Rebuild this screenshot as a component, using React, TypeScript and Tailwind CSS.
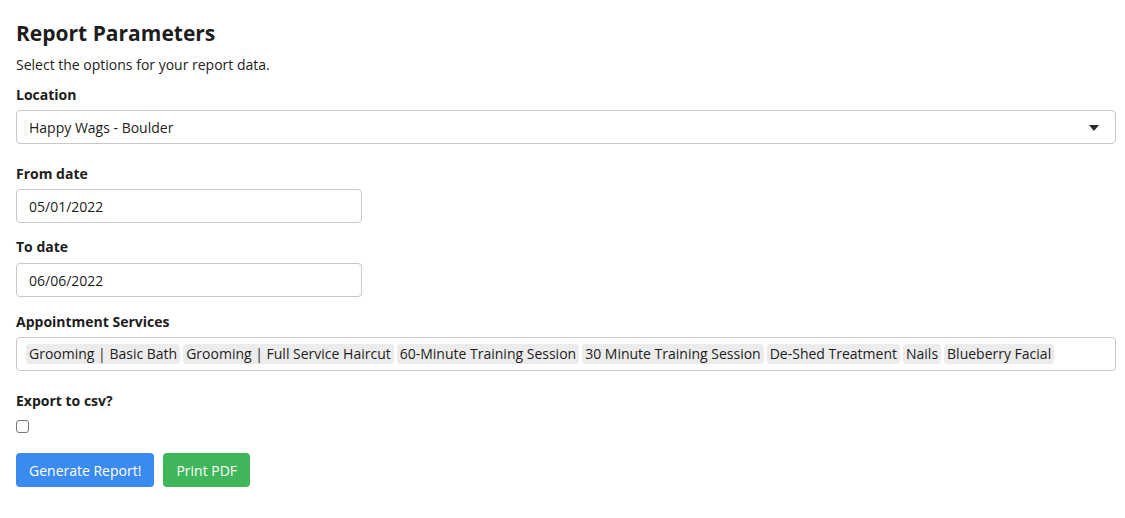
const services = [
  "Grooming | Basic Bath",
  "Grooming | Full Service Haircut",
  "60-Minute Training Session",
  "30 Minute Training Session",
  "De-Shed Treatment",
  "Nails",
  "Blueberry Facial",
];

function Label({ children, className = "" }: { children: React.ReactNode; className?: string }) {
  return <div className={`text-[14px] leading-5 font-bold text-[#1d1d1d] ${className}`}>{children}</div>;
}

export default function App() {
  return (
    <div className="min-h-[518px] bg-white px-4 pt-[19px] font-['Open_Sans',sans-serif] text-[#1d1d1d]">
      <h1 className="text-[21px] leading-7 font-bold">Report Parameters</h1>
      <p className="mt-2 text-[14px] leading-5">Select the options for your report data.</p>

      <Label className="mt-[10px]">Location</Label>
      <div className="mt-[5px] flex h-[34px] w-[1100px] items-center justify-between rounded border border-[#c8c8c8] pl-3 pr-4 text-[14px]">
        <span>Happy Wags - Boulder</span>
        <svg width="10" height="6" viewBox="0 0 10 6" className="mt-px">
          <path d="M0 0h10L5 6z" fill="#2b2b2b" />
        </svg>
      </div>

      <Label className="mt-5">From date</Label>
      <div className="mt-[5px] flex h-[34px] w-[346px] items-center rounded border border-[#c8c8c8] px-3 text-[14px]">
        05/01/2022
      </div>

      <Label className="mt-[14px]">To date</Label>
      <div className="mt-[6px] flex h-[34px] w-[346px] items-center rounded border border-[#c8c8c8] px-3 text-[14px]">
        06/06/2022
      </div>

      <Label className="mt-[15px]">Appointment Services</Label>
      <div className="mt-[5px] flex h-[34px] w-[1100px] items-center gap-[3px] rounded border border-[#c8c8c8] px-[9px] text-[14px]">
        {services.map((s) => (
          <span key={s} className="rounded-sm bg-[#ececec] px-[3px] leading-5">
            {s}
          </span>
        ))}
      </div>

      <Label className="mt-5">Export to csv?</Label>
      <div className="mt-[9px] flex">
        <span className="block h-[13px] w-[13px] rounded-[3px] border border-[#767676] bg-white" />
      </div>

      <div className="mt-5 flex gap-[9px]">
        <button className="h-[34px] rounded bg-[#3b8af0] px-[13px] text-[14px] text-white">Generate Report!</button>
        <button className="h-[34px] rounded bg-[#40b65a] px-[13px] text-[14px] text-white">Print PDF</button>
      </div>
    </div>
  );
}
